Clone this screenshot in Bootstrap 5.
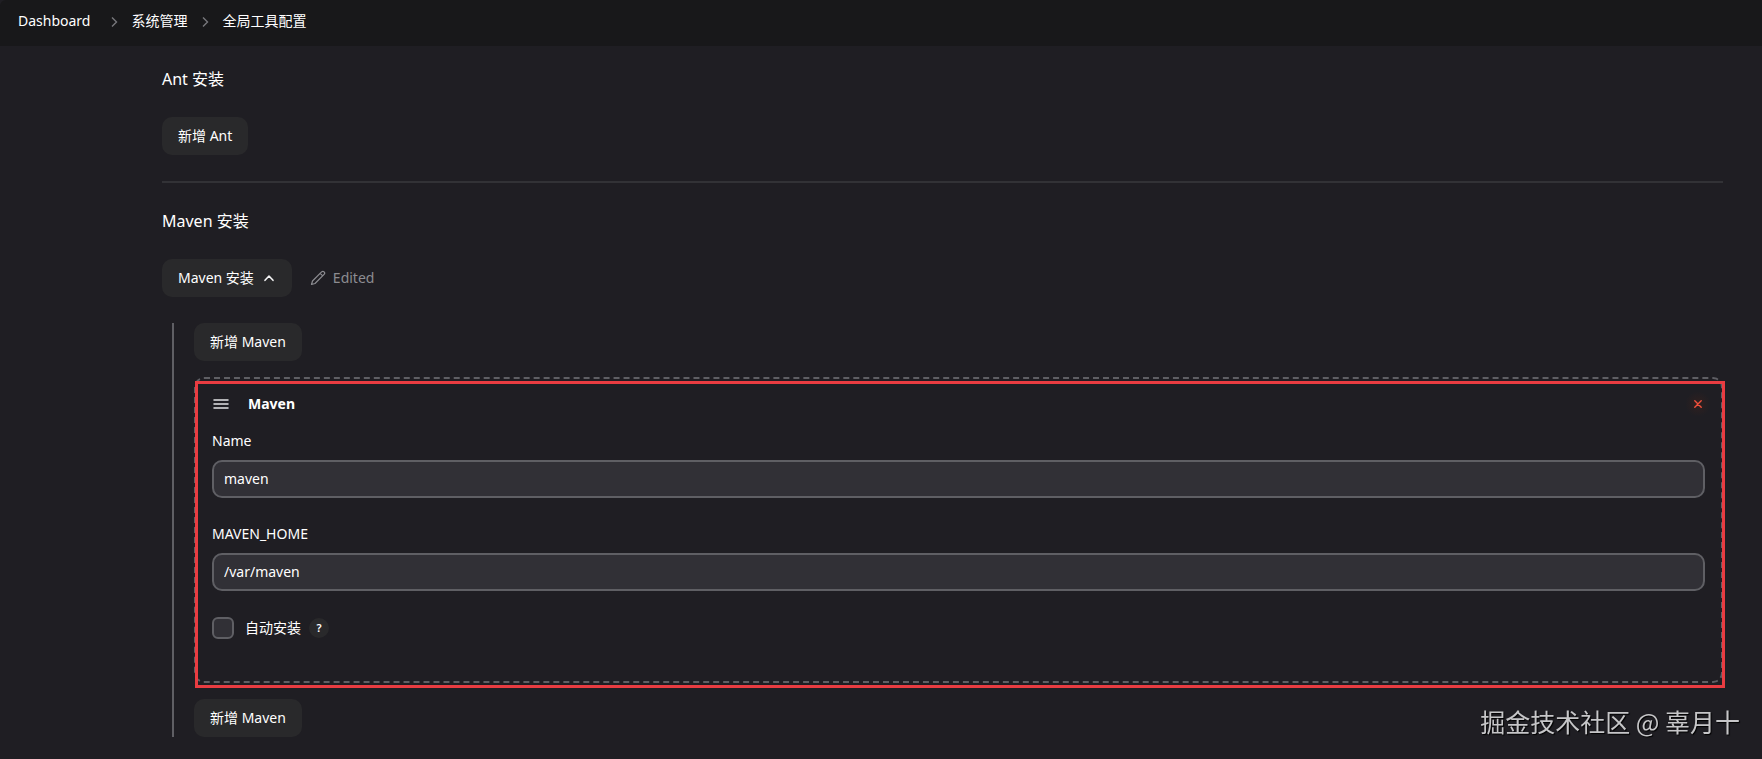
<!DOCTYPE html>
<html lang="zh-CN" data-bs-theme="dark">
<head>
<meta charset="utf-8">
<meta name="viewport" content="width=device-width, initial-scale=1">
<title>全局工具配置</title>
<link href="https://cdn.jsdelivr.net/npm/bootstrap@5.3.0/dist/css/bootstrap.min.css" rel="stylesheet">
<style>
  html { background: #55555a; }
  body {
    --line: #5f5f64;
    background: #1f1e23;
    color: #fff;
    font: 400 14px/20px "Noto Sans", "Noto Sans CJK SC", sans-serif;
  }
  .crumbs { background: #18181a; height: 46px; padding: 0 18px 4px; border-top-left-radius: 6px; }
  .crumbs a { color: #fff; }
  .crumbs svg { margin: 2px 13px 0 20px; stroke: #77777c; }
  .crumbs li + li + li svg { margin-left: 14px; }
  .config { padding: 21px 39px 22px 162px; }
  .config h2 { font-size: 16px; line-height: 24px; font-weight: 400; margin: 0 0 26px; }
  .tool-btn, .tool-btn:hover {
    background: #29292b; color: #fff; border: 0; border-radius: 10px;
    height: 38px; padding: 0 16px; font-size: 14px; line-height: 20px;
  }
  .divider { height: 2px; background: #323236; border: 0; opacity: 1; margin: 26px 0; }
  .edited { color: #8c8c91; gap: 7px; margin-left: 18px; }
  .nested { border-left: 2px solid var(--line); margin: 26px 0 0 10px; padding-left: 20px; }
  .tool-card { border: 2px dashed var(--line); border-radius: 10px; margin: 16px 0; padding: 13px 16px 42px; }
  .highlight { border: 3px solid #e93c41; top: 2px; right: -4px; bottom: -7px; left: -1px; pointer-events: none; }
  .tool-head { height: 24px; margin-bottom: 15px; }
  .tool-head h3 { font-size: 14px; line-height: 20px; font-weight: 700; margin: 0 auto 0 19px; }
  .remove { width: 24px; height: 24px; margin-right: -5px; background: radial-gradient(#30201f, #1f1e23 75%); border: 0; border-radius: 8px; }
  .form-label { display: block; margin: 0 0 9px; font-size: 14px; }
  .text-field, .text-field:focus {
    height: 38px; padding: 0 10px 2px; font-size: 14px; line-height: 20px; color: #fff;
    background: #313036; border: 2px solid var(--line); border-radius: 10px; margin-bottom: 26px;
  }
  .tick.form-check-input { width: 22px; height: 22px; margin: 0; background-color: #313036; border: 2px solid var(--line); border-radius: 6px; }
  .help { width: 20px; height: 20px; border: 0; border-radius: 50%; background: #29292b; color: #fff; font-size: 11px; font-weight: 600; line-height: 20px; }
  .tick-label { margin-left: 11px; }
  .watermark { right: 22px; bottom: 20px; color: #c6c6c8; font: 400 25px/36px "Noto Sans CJK SC", sans-serif; text-shadow: 1px 1px 1px #000; }
</style>
</head>
<body>
<nav aria-label="breadcrumb">
  <ol class="crumbs d-flex align-items-center list-unstyled m-0">
    <li><a class="text-decoration-none" href="#">Dashboard</a></li>
    <li class="d-flex align-items-center">
      <svg width="8" height="12" viewBox="0 0 8 12" fill="none" stroke-width="1.4" aria-hidden="true"><path d="M2 1.5 6.5 6 2 10.500"/></svg>
      <a class="text-decoration-none" href="#">系统管理</a></li>
    <li class="d-flex align-items-center">
      <svg width="8" height="12" viewBox="0 0 8 12" fill="none" stroke-width="1.4" aria-hidden="true"><path d="M2 1.5 6.5 6 2 10.500"/></svg>
      <a class="text-decoration-none" href="#">全局工具配置</a></li>
  </ol>
</nav>

<main class="config">
  <section>
    <h2>Ant 安装</h2>
    <button type="button" class="btn tool-btn d-block">新增 Ant</button>
  </section>
  <hr class="divider">
  <section>
    <h2>Maven 安装</h2>
    <div class="d-flex align-items-center">
      <button type="button" class="btn tool-btn d-flex align-items-center" aria-expanded="true">Maven 安装
        <svg class="ms-2" width="14" height="14" viewBox="0 0 14 14" fill="none" stroke="#f4f4f5" stroke-width="1.6" stroke-linecap="round" stroke-linejoin="round" aria-hidden="true"><path d="M3 9.300 7 5l4 4.300"/></svg>
      </button>
      <span class="edited d-flex align-items-center">
        <svg width="16" height="16" viewBox="0 0 16 16" fill="none" stroke="#8c8c91" stroke-width="1.200" stroke-linejoin="round" aria-hidden="true"><path d="M1.500 14.500l1-3.500L11.600 1.900a1.750 1.750 0 0 1 2.500 2.500L5 13.500zM10.200 3.300l2.500 2.500"/></svg>
        Edited</span>
    </div>

    <div class="nested">
      <button type="button" class="btn tool-btn d-block">新增 Maven</button>
      <form class="tool-card position-relative">
        <div class="tool-head d-flex align-items-center">
          <svg width="17" height="10" viewBox="0 0 17 10" aria-hidden="true"><path d="M2 1h14M2 5h14M2 9h14" stroke="#e4e4e6" stroke-width="1.500" stroke-linecap="round"/></svg>
          <h3>Maven</h3>
          <button type="button" class="remove d-flex align-items-center justify-content-center p-0" aria-label="删除">
            <svg width="8" height="8" viewBox="0 0 8 8" stroke="#f0503c" stroke-width="1.400" stroke-linecap="round" aria-hidden="true"><path d="M.8.8l6.400 6.400M7.200.8.8 7.200"/></svg>
          </button>
        </div>
        <label class="form-label" for="tool-name">Name</label>
        <input class="form-control text-field shadow-none" id="tool-name" type="text" value="maven">
        <label class="form-label" for="tool-home">MAVEN_HOME</label>
        <input class="form-control text-field shadow-none" id="tool-home" type="text" value="/var/maven">
        <div class="d-flex align-items-center">
          <input class="form-check-input tick" id="auto-install" type="checkbox">
          <label class="tick-label" for="auto-install">自动安装</label>
          <button type="button" class="help ms-2 p-0">?</button>
        </div>
        <div class="highlight position-absolute"></div>
      </form>
      <button type="button" class="btn tool-btn d-block">新增 Maven</button>
    </div>
  </section>
</main>
<div class="watermark position-fixed">掘金技术社区 @ 辜月十</div>
<script src="https://cdn.jsdelivr.net/npm/bootstrap@5.3.0/dist/js/bootstrap.bundle.min.js"></script>
</body>
</html>
